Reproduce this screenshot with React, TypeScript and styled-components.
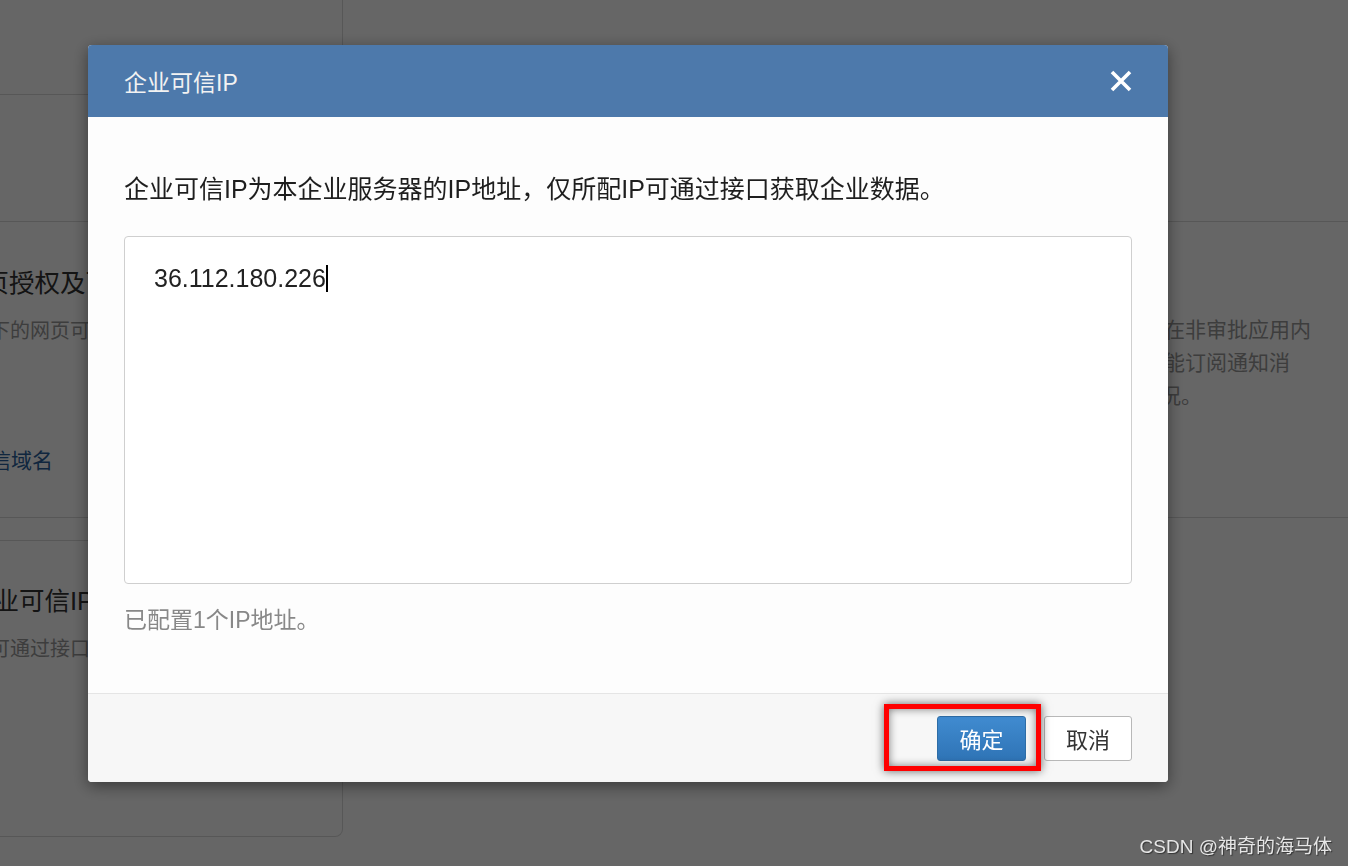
import styled, { createGlobalStyle } from "styled-components";

const GlobalStyle = createGlobalStyle`
  html, body {
    margin: 0;
    padding: 0;
  }
  body {
    font-family: "Liberation Sans", "Noto Sans CJK SC", sans-serif;
    background: #fff;
    overflow: hidden;
  }
`;

const ipList = ["36.112.180.226"];

const App = () => {
  return (
    <>
      <GlobalStyle />
      <Page>
        <LeftColumn>
          <CardTop>
            <Section $height={95} />
            <Section $height={127} />
            <SectionContent>
              <CardTitle>网页授权及可信域名</CardTitle>
              <CardDesc $indent={32}>下的网页可以使用JS-SDK</CardDesc>
              <CardLink $indent={11}>可信域名</CardLink>
            </SectionContent>
          </CardTop>
          <CardBottom>
            <CardTitle $indent={10}>企业可信IP</CardTitle>
            <CardDesc $indent={32}>可通过接口获取企业数据</CardDesc>
          </CardBottom>
        </LeftColumn>

        <RightArea>
          <Row $height={222} />
          <Row $height={296}>
            <RowText>
              <TextLine>开启后，可在非审批应用内</TextLine>
              <TextLine>审批应用仅能订阅通知消</TextLine>
              <TextLine $indent={17}>的审批情况。</TextLine>
            </RowText>
          </Row>
        </RightArea>
      </Page>

      <Overlay>
        <ModalBox>
          <ModalHeader>
            <ModalTitle>企业可信IP</ModalTitle>
            <CloseButton aria-label="关闭">
              <svg width="22" height="22" viewBox="0 0 22 22">
                <path
                  d="M2 2 L20 20 M20 2 L2 20"
                  stroke="#fff"
                  strokeWidth="3.6"
                  fill="none"
                />
              </svg>
            </CloseButton>
          </ModalHeader>

          <ModalBody>
            <BodyDesc>
              企业可信IP为本企业服务器的IP地址，仅所配IP可通过接口获取企业数据。
            </BodyDesc>
            <IpInput>
              {ipList.map((ip) => (
                <IpText key={ip}>{ip}</IpText>
              ))}
              <Caret />
            </IpInput>
            <Hint>已配置{ipList.length}个IP地址。</Hint>
          </ModalBody>

          <ModalFooter>
            <ConfirmWrap>
              <Highlight />
              <Button $primary>确定</Button>
            </ConfirmWrap>
            <Button>取消</Button>
          </ModalFooter>
        </ModalBox>
      </Overlay>

      <Watermark>CSDN @神奇的海马体</Watermark>
    </>
  );
};

export default App;

const Page = styled.div`
  display: flex;
  width: 1348px;
  height: 866px;
  overflow: hidden;
  background: #fff;
`;

const LeftColumn = styled.div`
  flex: 0 0 443px;
  margin-left: -100px;
  display: flex;
  flex-direction: column;
  gap: 22px;
`;

const CardTop = styled.div`
  height: 518px;
  box-sizing: border-box;
  display: flex;
  flex-direction: column;
  border-right: 1px solid #dadada;
  border-bottom: 1px solid #dadada;
`;

const Section = styled.div<{ $height: number }>`
  height: ${(p) => p.$height}px;
  box-sizing: border-box;
  flex-shrink: 0;
  border-bottom: 1px solid #dadada;
`;

const SectionContent = styled.div`
  flex: 1;
  padding: 44px 0 0 58px;
`;

const CardBottom = styled.div`
  height: 297px;
  box-sizing: border-box;
  padding: 43px 0 0 58px;
  border-top: 1px solid #dadada;
  border-right: 1px solid #dadada;
  border-bottom: 1px solid #dadada;
  border-radius: 0 0 8px 0;
`;

const CardTitle = styled.div<{ $indent?: number }>`
  margin-left: ${(p) => p.$indent ?? 0}px;
  font-size: 25.5px;
  line-height: 35px;
  color: #333;
  white-space: nowrap;
`;

const CardDesc = styled.div<{ $indent?: number }>`
  margin-left: ${(p) => p.$indent ?? 0}px;
  margin-top: 16px;
  font-size: 20px;
  line-height: 28px;
  color: #999;
  white-space: nowrap;
`;

const CardLink = styled.div<{ $indent?: number }>`
  margin-left: ${(p) => p.$indent ?? 0}px;
  margin-top: 101px;
  font-size: 21px;
  line-height: 30px;
  color: #2a5f9c;
  white-space: nowrap;
`;

const RightArea = styled.div`
  flex: 1;
  display: flex;
  flex-direction: column;
`;

const Row = styled.div<{ $height: number }>`
  height: ${(p) => p.$height}px;
  box-sizing: border-box;
  flex-shrink: 0;
  border-bottom: 1px solid #dadada;
`;

const RowText = styled.div`
  padding: 91px 0 0 716px;
`;

const TextLine = styled.div<{ $indent?: number }>`
  margin-left: ${(p) => p.$indent ?? 0}px;
  font-size: 21px;
  line-height: 33px;
  color: #999;
  white-space: nowrap;
`;

const Overlay = styled.div`
  position: fixed;
  inset: 0;
  background: rgba(0, 0, 0, 0.6);
  padding: 45px 0 0 88px;
  box-sizing: border-box;
`;

const ModalBox = styled.div`
  width: 1080px;
  height: 737px;
  display: flex;
  flex-direction: column;
  background: #fdfdfd;
  border-radius: 4px;
  overflow: hidden;
  box-shadow: 0 4px 16px rgba(0, 0, 0, 0.45);
`;

const ModalHeader = styled.div`
  height: 72px;
  flex-shrink: 0;
  display: flex;
  align-items: center;
  justify-content: space-between;
  padding: 0 36px;
  background: #4d79ab;
`;

const ModalTitle = styled.div`
  font-size: 23px;
  color: #f2f2f2;
`;

const CloseButton = styled.button`
  display: flex;
  padding: 0;
  border: none;
  background: transparent;
  cursor: pointer;
`;

const ModalBody = styled.div`
  flex: 1;
  padding: 55px 36px 0;
`;

const BodyDesc = styled.div`
  font-size: 25px;
  line-height: 35px;
  color: #1e1e1e;
  margin-bottom: 29px;
`;

const IpInput = styled.div`
  height: 348px;
  box-sizing: border-box;
  padding: 24px 29px;
  border: 1px solid #cfcfcf;
  border-radius: 4px;
  background: #fff;
  display: flex;
  align-items: flex-start;
`;

const IpText = styled.span`
  font-size: 25px;
  line-height: 35px;
  color: #222;
`;

const Caret = styled.span`
  flex-shrink: 0;
  width: 2px;
  height: 27px;
  margin-top: 4px;
  background: #000;
`;

const Hint = styled.div`
  margin-top: 19px;
  font-size: 23px;
  line-height: 35px;
  color: #888;
`;

const ModalFooter = styled.div`
  height: 89px;
  flex-shrink: 0;
  box-sizing: border-box;
  display: flex;
  align-items: center;
  justify-content: flex-end;
  gap: 18px;
  padding-right: 36px;
  border-top: 1px solid #e5e5e5;
  background: #f7f7f7;
`;

const ConfirmWrap = styled.div`
  position: relative;
  display: flex;
`;

const Highlight = styled.div`
  position: absolute;
  left: -53px;
  top: -12px;
  width: 157px;
  height: 67px;
  box-sizing: border-box;
  border: 5px solid #ff0000;
  box-shadow: 0 0 9px rgba(0, 0, 0, 0.6), inset 0 0 9px rgba(0, 0, 0, 0.5);
  pointer-events: none;
`;

const Button = styled.button<{ $primary?: boolean }>`
  width: ${(p) => (p.$primary ? "89px" : "88px")};
  height: 45px;
  padding: 0;
  border-radius: 3px;
  font-family: inherit;
  font-size: 22px;
  cursor: pointer;
  background: ${(p) =>
    p.$primary ? "linear-gradient(#408bd0, #2f74b6)" : "#fff"};
  border: 1px solid ${(p) => (p.$primary ? "#2e6da6" : "#b8b8b8")};
  color: ${(p) => (p.$primary ? "#fff" : "#333")};
`;

const Watermark = styled.div`
  position: fixed;
  right: 16px;
  bottom: 8px;
  font-size: 19px;
  color: #e6e6e6;
  text-shadow: 1px 1px 1px #333;
  white-space: nowrap;
`;
